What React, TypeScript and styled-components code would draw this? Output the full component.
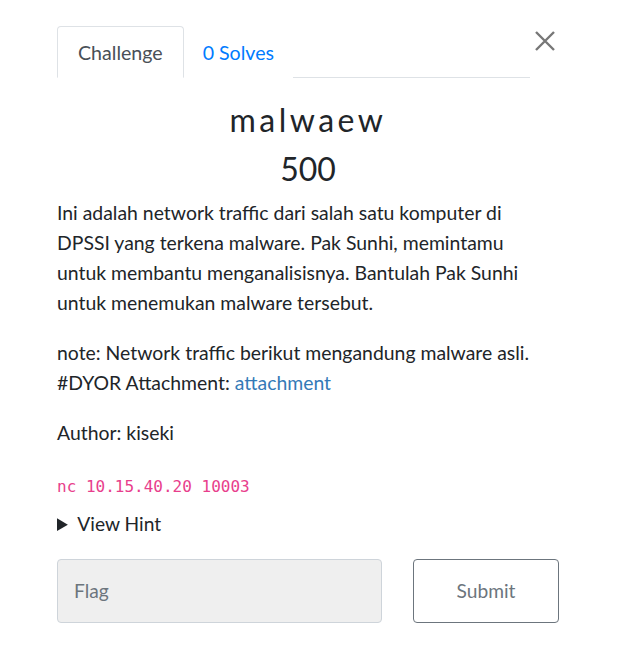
import { createGlobalStyle } from 'styled-components'
import styled from 'styled-components'

const GlobalStyle = createGlobalStyle`
  html, body {
    margin: 0;
    padding: 0;
    background: #ffffff;
  }
  body {
    font-family: Lato, "Noto Sans", sans-serif;
    color: #212529;
  }
`

const App = () => {
  return (
    <>
      <GlobalStyle />
      <Modal>
        <TopRow>
          <Tabs>
            <Tab $active>Challenge</Tab>
            <Tab>0 Solves</Tab>
          </Tabs>
          <Close aria-label="Close">
            <svg width="20" height="20" viewBox="0 0 20 20">
              <path d="M1 1 L19 19 M19 1 L1 19" stroke="#777777" strokeWidth="2.4" />
            </svg>
          </Close>
        </TopRow>

        <Title>malwaew</Title>
        <Value>500</Value>

        <Description>
          <p>
            Ini adalah network traffic dari salah satu komputer di DPSSI yang terkena malware. Pak Sunhi,
            memintamu untuk membantu menganalisisnya. Bantulah Pak Sunhi untuk menemukan malware tersebut.
          </p>
          <p>
            note: Network traffic berikut mengandung malware asli. #DYOR Attachment: <Link href="#">attachment</Link>
          </p>
          <p>Author: kiseki</p>
        </Description>

        <Code>nc 10.15.40.20 10003</Code>

        <Hint>
          <summary>View Hint</summary>
        </Hint>

        <SubmitRow>
          <FlagInput placeholder="Flag" />
          <SubmitButton>Submit</SubmitButton>
        </SubmitRow>
      </Modal>
    </>
  )
}

const Modal = styled.div`
  width: 502px;
  padding: 26px 0 24px 57px;
`

const TopRow = styled.div`
  display: flex;
  align-items: flex-start;
`

const Tabs = styled.div`
  display: flex;
  width: 473px;
  border-bottom: 1px solid #dee2e6;
`

const Tab = styled.div<{ $active?: boolean }>`
  height: 50px;
  display: flex;
  align-items: center;
  padding: 0 ${(p) => (p.$active ? '20px' : '18px')};
  margin-bottom: -1px;
  font-size: 19.6px;
  color: ${(p) => (p.$active ? '#495057' : '#007bff')};
  background: #fff;
  border: 1px solid ${(p) => (p.$active ? '#dee2e6' : 'transparent')};
  border-bottom-color: ${(p) => (p.$active ? '#fff' : 'transparent')};
  border-radius: 4px 4px 0 0;
`

const Close = styled.div`
  margin-left: 5px;
  margin-top: 5px;
  width: 20px;
  height: 20px;
  display: flex;
`

const Title = styled.h3`
  margin: 23px 0 0;
  text-align: center;
  font-size: 32px;
  font-weight: 400;
  letter-spacing: 3.5px;
  line-height: 1.2;
  color: #212529;
`

const Value = styled.h4`
  margin: 11px 0 0;
  text-align: center;
  font-size: 32px;
  font-weight: 400;
  line-height: 1.2;
  color: #212529;
`

const Description = styled.div`
  width: 476px;
  margin-top: 9px;
  font-size: 19.4px;
  line-height: 30px;

  p {
    margin: 0 0 20px;
  }
`

const Link = styled.a`
  color: #337ab7;
  text-decoration: none;
`

const Code = styled.code`
  display: block;
  margin-top: 29px;
  font-family: "DejaVu Sans Mono", "Liberation Mono", monospace;
  font-size: 16px;
  color: #e83e8c;
`

const Hint = styled.details`
  margin-top: 16px;
  font-size: 19.2px;

  summary {
    cursor: pointer;
  }
`

const SubmitRow = styled.div`
  display: flex;
  gap: 31px;
  margin-top: 24px;
`

const FlagInput = styled.input`
  box-sizing: border-box;
  width: 325px;
  height: 64px;
  padding: 0 16px;
  font-family: Lato, sans-serif;
  font-size: 19.2px;
  color: #495057;
  background: #efefef;
  border: 1px solid #ced4da;
  border-radius: 4px;
  outline: none;

  &::placeholder {
    color: #6c757d;
  }
`

const SubmitButton = styled.button`
  box-sizing: border-box;
  width: 146px;
  height: 64px;
  font-family: Lato, sans-serif;
  font-size: 19.2px;
  color: #6c757d;
  background: #fff;
  border: 1px solid #6c757d;
  border-radius: 4px;
`

export default App
